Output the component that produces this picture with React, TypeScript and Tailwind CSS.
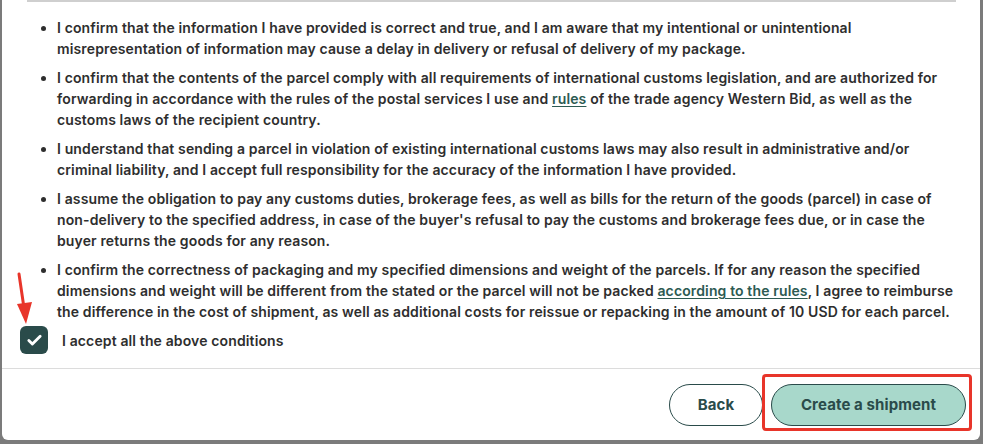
import { Check } from 'lucide-react';

const items: React.ReactNode[] = [
  <>
    I confirm that the information I have provided is correct and true, and I am aware that my intentional or
    unintentional misrepresentation of information may cause a delay in delivery or refusal of delivery of my package.
  </>,
  <>
    I confirm that the contents of the parcel comply with all requirements of international customs legislation, and
    are authorized for forwarding in accordance with the rules of the postal services I use and{' '}
    <a href="#" className="text-[#2d5a52] underline underline-offset-2">
      rules
    </a>{' '}
    of the trade agency Western Bid, as well as the customs laws of the recipient country.
  </>,
  <>
    I understand that sending a parcel in violation of existing international customs laws may also result in
    administrative and/or criminal liability, and I accept full responsibility for the accuracy of the information I
    have provided.
  </>,
  <>
    I assume the obligation to pay any customs duties, brokerage fees, as well as bills for the return of the goods
    (parcel) in case of non-delivery to the specified address, in case of the buyer's refusal to pay the customs and
    brokerage fees due, or in case the buyer returns the goods for any reason.
  </>,
  <>
    I confirm the correctness of packaging and my specified dimensions and weight of the parcels. If for any reason the
    specified dimensions and weight will be different from the stated or the parcel will not be packed{' '}
    <a href="#" className="text-[#2d5a52] underline underline-offset-2">
      according to the rules
    </a>
    , I agree to reimburse the difference in the cost of shipment, as well as additional costs for reissue or repacking
    in the amount of 10 USD for each parcel.
  </>,
];

export default function App() {
  return (
    <div
      className="h-[444px] w-[983px] overflow-hidden bg-[#7b7b7b] pl-[2px] pr-[3px]"
      style={{ fontFamily: 'Inter, "Noto Sans", sans-serif' }}
    >
      <div className="relative h-[440px] rounded-b-[6px] bg-white">
        {/* body */}
        <div className="px-[18px]">
          <div className="ml-[7px] mr-[6px] h-[2px] bg-[#cfcfcf]" />
          <ul className="list-disc pl-[37px] pr-[4px] pt-[15px] text-[14px] font-semibold leading-[21px] tracking-[0.13px] text-[#2e2e2e]">
            {items.map((item, i) => (
              <li key={i} className="mb-[8px] last:mb-0">
                {item}
              </li>
            ))}
          </ul>
          <label className="mt-[4px] flex items-center gap-[14px]">
            <span className="flex h-[28px] w-[28px] items-center justify-center rounded-[6px] bg-[#2a4b4a]">
              <Check className="h-[17px] w-[17px] text-white" strokeWidth={4} />
            </span>
            <span className="text-[14px] font-semibold tracking-[0.13px] text-[#2e2e2e]">
              I accept all the above conditions
            </span>
          </label>
        </div>

        {/* footer */}
        <div className="mt-[14px] flex justify-end gap-[8px] border-t border-[#dcdcdc] pb-[13px] pr-[14px] pt-[15px]">
          <button className="h-[42px] w-[94px] rounded-full border border-[#2a4b4a] bg-white text-[15px] font-bold tracking-[0.1px] text-[#2a4b4a]">
            Back
          </button>
          <div className="relative">
            <button className="h-[42px] w-[195px] rounded-full border border-[#2a4b4a] bg-[#a8d8cb] text-[15px] font-bold tracking-[0.1px] text-[#2a4b4a]">
              Create a shipment
            </button>
            <span className="pointer-events-none absolute -bottom-[5px] -left-[9px] -right-[6px] -top-[10px] rounded-[4px] border-[3px] border-[#e8352a]" />
          </div>
        </div>

        {/* annotation arrow */}
        <svg className="absolute left-[12px] top-[272px]" width="24" height="54" viewBox="0 0 24 54">
          <path d="M5 2 L10 36" stroke="#e8352a" strokeWidth="3" strokeLinecap="round" />
          <path d="M3 32 L18 30 L12 52 Z" fill="#e8352a" />
        </svg>
      </div>
      <div className="pt-[1px] text-center text-[14px] leading-[18px] text-[#2b2b2b]">
        © 2026 Copyright: <span className="text-[#2d4a44]">Western Bid</span> 2026.17.2
      </div>
    </div>
  );
}
